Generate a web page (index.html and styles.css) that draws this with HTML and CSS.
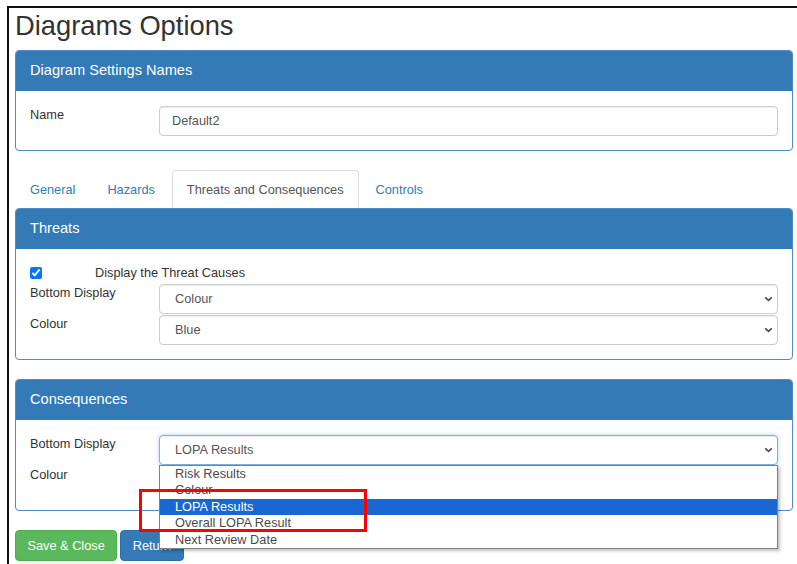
FILE: index.html
```html
<!DOCTYPE html>
<html lang="en">
<head>
<meta charset="utf-8">
<title>Diagrams Options</title>
<link rel="stylesheet" href="styles.css">
</head>
<body>
<div class="frame">
  <h2 class="page-title">Diagrams Options</h2>

  <section class="panel">
    <div class="panel-heading">Diagram Settings Names</div>
    <div class="panel-body">
      <div class="form-grid">
        <label class="field-label">Name</label>
        <div class="form-control">Default2</div>
      </div>
    </div>
  </section>

  <ul class="tabs">
    <li><a class="tab" href="#">General</a></li>
    <li><a class="tab" href="#">Hazards</a></li>
    <li><a class="tab active" href="#">Threats and Consequences</a></li>
    <li><a class="tab" href="#">Controls</a></li>
  </ul>

  <section class="panel">
    <div class="panel-heading">Threats</div>
    <div class="panel-body">
      <div class="check-row">
        <input type="checkbox" class="check" checked>
        <span class="check-text">Display the Threat Causes</span>
      </div>
      <div class="form-grid">
        <label class="field-label">Bottom Display</label>
        <div class="form-control select">
          <span>Colour</span>
          <svg class="chevron" width="9" height="6" viewBox="0 0 9 6"><path d="M1.2 1.3 L4.5 4.4 L7.8 1.3"/></svg>
        </div>
        <label class="field-label">Colour</label>
        <div class="form-control select">
          <span>Blue</span>
          <svg class="chevron" width="9" height="6" viewBox="0 0 9 6"><path d="M1.2 1.3 L4.5 4.4 L7.8 1.3"/></svg>
        </div>
      </div>
    </div>
  </section>

  <section class="panel panel-spaced">
    <div class="panel-heading">Consequences</div>
    <div class="panel-body">
      <div class="form-grid">
        <label class="field-label">Bottom Display</label>
        <div class="select-wrap">
          <div class="form-control select focused">
            <span>LOPA Results</span>
            <svg class="chevron" width="9" height="6" viewBox="0 0 9 6"><path d="M1.2 1.3 L4.5 4.4 L7.8 1.3"/></svg>
          </div>
          <ul class="listbox">
            <li class="option">Risk Results</li>
            <li class="option">Colour</li>
            <li class="option selected">LOPA Results</li>
            <li class="option">Overall LOPA Result</li>
            <li class="option">Next Review Date</li>
          </ul>
          <div class="callout"></div>
        </div>
        <label class="field-label">Colour</label>
        <div class="form-control select">
          <span>Blue</span>
          <svg class="chevron" width="9" height="6" viewBox="0 0 9 6"><path d="M1.2 1.3 L4.5 4.4 L7.8 1.3"/></svg>
        </div>
      </div>
    </div>
  </section>

  <div class="actions">
    <button class="btn btn-success">Save &amp; Close</button>
    <button class="btn btn-primary">Return</button>
  </div>
</div>
</body>
</html>
```

FILE: styles.css
```css
* {
  box-sizing: border-box;
}

html,
body {
  margin: 0;
  background: #fff;
}

body {
  font-family: "Liberation Sans", Arial, sans-serif;
  font-size: 12.75px;
  line-height: 18px;
  color: #333;
}

/* window frame: dark edge along top and left */
.frame {
  margin: 6px 0 0 7px;
  height: 558px;
  overflow: hidden;
  border-top: 2px solid #111;
  border-left: 2px solid #111;
  padding: 0 4px 0 6px;
}

.page-title {
  margin: 3px 0 9px;
  font-size: 27.3px;
  line-height: 30px;
  font-weight: normal;
  color: #333;
}

/* panels */
.panel {
  border: 1px solid #4f8cc4;
  border-radius: 4px;
  background: #fff;
}

.panel-spaced {
  margin-top: 19px;
}

.panel-heading {
  background: #337ab7;
  color: #fff;
  font-size: 14.6px;
  line-height: 16px;
  padding: 11px 14px 13px;
  border-radius: 3px 3px 0 0;
}

.panel-body {
  padding: 15px 14px 14px;
}

/* label / control rows */
.form-grid {
  display: grid;
  grid-template-columns: 129px 1fr;
  row-gap: 1px;
}

.field-label {
  line-height: 18px;
  color: #333;
}

.form-control {
  height: 30px;
  display: flex;
  align-items: center;
  padding: 0 12px;
  border: 1px solid #ccc;
  border-radius: 4px;
  color: #555;
  background: #fff;
  box-shadow: inset 0 1px 1px rgba(0, 0, 0, 0.075);
}

.select {
  justify-content: space-between;
  padding: 0 4px 0 15px;
}

.select.focused {
  border-color: #7db1e4;
  box-shadow: inset 0 1px 1px rgba(0, 0, 0, 0.075), 0 0 4px rgba(102, 175, 233, 0.55);
}

.chevron path {
  fill: none;
  stroke: #4a4a4a;
  stroke-width: 1.6;
}

/* checkbox row */
.check-row {
  display: flex;
  align-items: center;
  height: 18px;
  margin-bottom: 2px;
}

.check {
  width: 12px;
  height: 12px;
  margin: 0;
}

.check-text {
  margin-left: 53px;
}

/* tabs */
.tabs {
  list-style: none;
  margin: 19px 0 0;
  padding: 0;
  display: flex;
  height: 38px;
}

.tab {
  display: block;
  padding: 1px 14px 0;
  line-height: 35px;
  border: 1px solid transparent;
  border-radius: 4px 4px 0 0;
  margin-right: 2px;
  color: #337ab7;
  text-decoration: none;
}

.tab.active {
  border-color: #ddd;
  border-bottom-color: transparent;
  color: #555;
  background: #fff;
}

/* open dropdown list */
.select-wrap {
  position: relative;
}

.listbox {
  position: absolute;
  top: 100%;
  left: 0;
  right: 0;
  z-index: 2;
  list-style: none;
  margin: 0;
  padding: 0;
  background: #fff;
  border: 1px solid #808080;
  box-shadow: 2px 2px 3px rgba(0, 0, 0, 0.25);
}

.option {
  height: 16.4px;
  line-height: 16.4px;
  padding-left: 15px;
  color: #4a4a4a;
  white-space: nowrap;
}

.option.selected {
  background: #1967d2;
  color: #fff;
}

/* red highlight box drawn over the list */
.callout {
  position: absolute;
  left: -20px;
  top: 54px;
  width: 228px;
  height: 43px;
  border: 3px solid #f00;
  z-index: 3;
  pointer-events: none;
}

/* buttons */
.actions {
  display: flex;
  gap: 3px;
  margin-top: 19px;
}

.btn {
  height: 31px;
  padding: 0 11.5px;
  border: 1px solid;
  border-radius: 4px;
  font: inherit;
  color: #fff;
  display: inline-flex;
  align-items: center;
}

.btn-success {
  background: #5cb85c;
  border-color: #4cae4c;
}

.btn-primary {
  background: #337ab7;
  border-color: #2e6da4;
}
```
